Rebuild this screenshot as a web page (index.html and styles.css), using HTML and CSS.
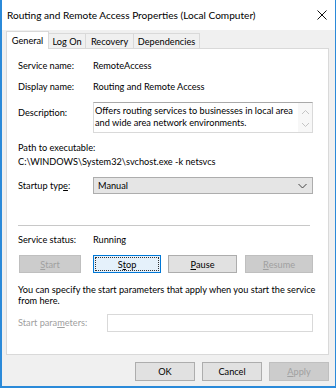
FILE: index.html
```html
<!DOCTYPE html>
<html>
<head>
<meta charset="utf-8">
<link rel="stylesheet" href="styles.css">
</head>
<body>
<div class="window">
  <div class="titlebar">
    <span class="title">Routing and Remote Access Properties (Local Computer)</span>
    <svg class="close" width="10" height="10" viewBox="0 0 10 10"><path d="M0.5 0.5 L9.5 9.5 M9.5 0.5 L0.5 9.5" stroke="#111" stroke-width="1" fill="none"/></svg>
  </div>
  <div class="client">
    <div class="tabs">
      <div class="tab active t-general">General</div>
      <div class="tab t-logon">Log On</div>
      <div class="tab t-recovery">Recovery</div>
      <div class="tab t-deps">Dependencies</div>
    </div>
    <div class="panel">
      <div class="field f-name"><span class="label">Service name:</span><span class="value">RemoteAccess</span></div>
      <div class="field f-display"><span class="label">Display name:</span><span class="value">Routing and Remote Access</span></div>
      <div class="field f-desc">
        <span class="label desc-label">Description:</span>
        <div class="desc-box">
          <div class="desc-text">Offers routing services to businesses in local area<br>and wide area network environments.</div>
          <div class="desc-scroll">
            <svg width="9" height="6" viewBox="0 0 9 6"><path d="M1 5 L4.5 1.5 L8 5" stroke="#c4c4c4" stroke-width="1" fill="none"/></svg>
            <svg width="9" height="6" viewBox="0 0 9 6"><path d="M1 1 L4.5 4.5 L8 1" stroke="#c4c4c4" stroke-width="1" fill="none"/></svg>
          </div>
        </div>
      </div>
      <div class="path-label">Path to executable:</div>
      <div class="path-value">C:\WINDOWS\System32\svchost.exe -k netsvcs</div>
      <div class="field f-startup">
        <span class="label">Startup typ<u>e</u>:</span>
        <div class="combo"><span>Manual</span><svg width="9" height="6" viewBox="0 0 9 6"><path d="M0.5 1 L4.5 5 L8.5 1" stroke="#444" stroke-width="1" fill="none"/></svg></div>
      </div>
      <div class="sep"></div>
      <div class="field f-status"><span class="label">Service status:</span><span class="value">Running</span></div>
      <div class="svc-buttons">
        <div class="btn disabled b-start"><u>S</u>tart</div>
        <div class="btn focused b-stop">S<u>t</u>op</div>
        <div class="btn b-pause"><u>P</u>ause</div>
        <div class="btn disabled b-resume"><u>R</u>esume</div>
      </div>
      <p class="hint">You can specify the start parameters that apply when you start the service<br>from here.</p>
      <div class="field f-params">
        <span class="label params-label">Start para<u>m</u>eters:</span>
        <div class="input"></div>
      </div>
    </div>
    <div class="footer">
      <div class="btn fbtn">OK</div>
      <div class="btn fbtn">Cancel</div>
      <div class="btn fbtn disabled"><u>A</u>pply</div>
    </div>
  </div>
</div>
</body>
</html>
```

FILE: styles.css
```css
* { box-sizing: border-box; }
html, body { margin: 0; padding: 0; }
body {
  font-family: "Lato", "Noto Sans", sans-serif;
  font-size: 9.2px;
  color: #000;
  background: #fff;
}
.window {
  width: 336px;
  height: 388px;
  border-left: 2px solid #2b8ad9;
  border-right: 1px solid #2b8ad9;
  border-bottom: 2px solid #2b8ad9;
  background: #f0f0f0;
  display: flex;
  flex-direction: column;
}
.titlebar {
  height: 30px;
  flex: none;
  background: #fff;
  display: flex;
  align-items: center;
  justify-content: space-between;
  padding: 0 8px 0 5px;
}
.title { font-size: 10.1px; white-space: nowrap; }
.close { display: block; }
.client {
  flex: 1;
  display: flex;
  flex-direction: column;
  padding: 0 6px 0 4px;
}
.tabs {
  height: 18px;
  display: flex;
  align-items: flex-end;
  position: relative;
  z-index: 1;
}
.tab {
  height: 15px;
  border: 1px solid #d9d9d9;
  border-bottom: none;
  background: #f0f0f0;
  display: flex;
  align-items: center;
  justify-content: center;
  margin-left: -1px;
  white-space: nowrap;
}
.tab.active {
  height: 18px;
  margin-bottom: -1px;
  background: #fff;
  margin-left: 0;
  padding-bottom: 1px;
}
.t-general { width: 43px; }
.t-logon { width: 38px; }
.t-recovery { width: 49px; }
.t-deps { width: 67px; }
.panel {
  height: 307px;
  flex: none;
  border: 1px solid #d9d9d9;
  background: #fff;
  padding: 11px 15px 0 11px;
}
.field { display: flex; align-items: center; }
.label { width: 75px; flex: none; line-height: 12px; white-space: nowrap; }
.value { line-height: 12px; white-space: nowrap; }
.f-display { margin-top: 9px; }
.f-desc { margin-top: 9px; align-items: flex-start; }
.desc-label { margin-top: 5px; }
.desc-box {
  flex: 1;
  height: 31px;
  border: 1px solid #d9d9d9;
  border-top-color: #a9a9a9;
  display: flex;
}
.desc-text {
  flex: 1;
  padding: 2px 0 0 1px;
  line-height: 11.5px;
  white-space: nowrap;
  overflow: hidden;
}
.desc-scroll {
  width: 14px;
  flex: none;
  background: #f7f7f7;
  display: flex;
  flex-direction: column;
  align-items: center;
  justify-content: space-between;
  padding: 6px 0 4px;
}
.desc-scroll svg { display: block; }
.path-label { margin-top: 9px; line-height: 12px; }
.path-value { margin-top: 2px; line-height: 12px; white-space: nowrap; }
.f-startup { margin-top: 9px; }
.combo {
  flex: 1;
  height: 17px;
  background: #e5e5e5;
  border: 1px solid #adadad;
  display: flex;
  align-items: center;
  justify-content: space-between;
  padding: 0 5px 0 4px;
}
.combo svg { display: block; }
.sep {
  margin-top: 31px;
  margin-right: 3px;
  height: 1px;
  background: #c8c8c8;
}
.f-status { margin-top: 8px; }
.svc-buttons {
  margin-top: 9px;
  display: flex;
  height: 18px;
}
.btn {
  height: 18px;
  background: #e1e1e1;
  border: 1px solid #adadad;
  display: flex;
  align-items: center;
  justify-content: center;
  position: relative;
  white-space: nowrap;
}
.btn.disabled {
  background: #cccccc;
  border-color: #bfbfbf;
  color: #a0a0a0;
}
.btn.focused {
  background: #e5f1fb;
  border-color: #0078d7;
}
.btn.focused::after {
  content: "";
  position: absolute;
  inset: 1px;
  border: 1px dotted #333;
}
.b-start { width: 62px; margin-left: 1px; }
.b-stop { width: 68px; margin-left: 12px; }
.b-pause { width: 69px; margin-left: 7px; }
.b-resume { width: 68px; margin-left: 8px; }
.hint {
  margin: 11px 0 0;
  line-height: 11px;
  white-space: nowrap;
}
.f-params { margin-top: 8px; }
.params-label { width: 89px; color: #a0a0a0; }
.input {
  flex: 1;
  height: 18px;
  border: 1px solid #d9d9d9;
  background: #fff;
}
.footer {
  margin-top: 7px;
  display: flex;
  justify-content: flex-end;
  gap: 7px;
}
.fbtn { width: 60px; height: 19px; }
```
